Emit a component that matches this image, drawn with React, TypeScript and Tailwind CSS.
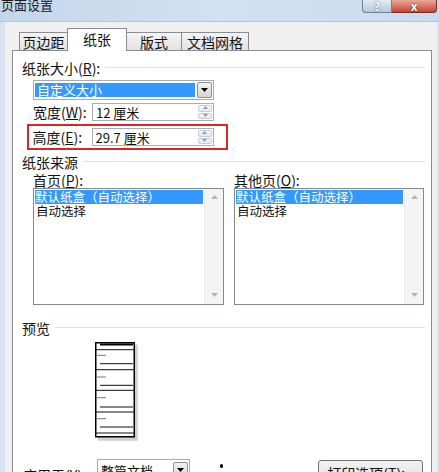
import type { FC, ReactElement } from 'react';

const font = "font-['Noto_Sans_CJK_SC','Noto_Sans',sans-serif]";

// label like 纸张大小(R): with the access key underlined
const Label: FC<{ text: string; k: string }> = ({ text, k }): ReactElement => (
  <span className="whitespace-nowrap">
    {text}(<span className="underline underline-offset-1">{k}</span>):
  </span>
);

const Tri: FC<{ up?: boolean; color?: string; w?: number }> = ({ up, color = '#000', w = 7 }) => (
  <svg width={w} height={Math.ceil(w / 2) + 1} viewBox={`0 0 ${w} ${Math.ceil(w / 2) + 1}`}>
    {up ? (
      <polygon points={`0,${Math.ceil(w / 2)} ${w},${Math.ceil(w / 2)} ${w / 2},0`} fill={color} />
    ) : (
      <polygon points={`0,0 ${w},0 ${w / 2},${Math.ceil(w / 2)}`} fill={color} />
    )}
  </svg>
);

const Spin: FC = () => (
  <div className="w-[14px] h-full flex flex-col gap-px py-px">
    <div className="flex-1 border border-[#c3cdd9] rounded-[2px] bg-gradient-to-b from-[#f7f9fb] to-[#e4e9ef] flex items-center justify-center">
      <Tri up color="#8a9bb0" w={5} />
    </div>
    <div className="flex-1 border border-[#c3cdd9] rounded-[2px] bg-gradient-to-b from-[#f7f9fb] to-[#e4e9ef] flex items-center justify-center">
      <Tri color="#8a9bb0" w={5} />
    </div>
  </div>
);

const DropBtn: FC = () => (
  <div className="w-[15px] h-[16px] border border-[#8e8f8f] rounded-[2px] bg-gradient-to-b from-[#f2f2f2] to-[#d6d6d6] flex items-center justify-center">
    <Tri w={7} />
  </div>
);

const SectionTitle: FC<{ text: string }> = ({ text }) => (
  <div className="h-[20px] pl-[9px] pr-[6px] flex items-center">
    <span className="text-[14px] leading-none">{text}</span>
    <div className="flex-1 h-px bg-[#dde1e6] ml-[5px] -mt-[2px]" />
  </div>
);

const ListBox: FC<{ label: string; k: string; w: string }> = ({ label, k, w }) => (
  <div className={`${w} flex flex-col`}>
    <div className="h-[16px] text-[14px] leading-[16px]">
      <Label text={label} k={k} />
    </div>
    <div className="h-[117px] border border-[#828790] flex bg-white">
      <div className="flex-1 pt-px pl-px pr-px text-[12.5px] leading-[14px]">
        <div className="h-[14px] bg-[#3399ff] text-white whitespace-nowrap">默认纸盒（自动选择）</div>
        <div className="h-[14px] whitespace-nowrap pl-[1px]">自动选择</div>
      </div>
      <div className="w-[19px] bg-[#f4f4f4] border-l border-[#ececec] flex flex-col justify-between">
        <div className="h-[17px] flex items-center justify-center">
          <Tri up color="#b4b4b4" w={7} />
        </div>
        <div className="h-[17px] flex items-center justify-center">
          <Tri color="#b4b4b4" w={7} />
        </div>
      </div>
    </div>
  </div>
);

const PagePreview: FC = () => {
  const full = [7.7, 27.7, 48.3, 70, 91];
  const short = [13.3, 35, 55.7, 76.7];
  const long = [21.7, 43.3, 65, 85];
  return (
    <svg width="46" height="101" viewBox="0 0 46 101">
      <rect x="3" y="3" width="40" height="96" fill="#9a9a9a" opacity="0.35" />
      <rect x="2" y="2" width="40" height="96" fill="#bdbdbd" opacity="0.4" />
      <rect x="0.75" y="0.75" width="38.5" height="94" fill="#fff" stroke="#000" strokeWidth="1.5" />
      <line x1="5" y1="2.5" x2="38" y2="2.5" stroke="#000" strokeWidth="2" />
      {full.map((y) => (
        <line key={`f${y}`} x1="1" y1={y} x2="39" y2={y} stroke="#111" strokeWidth="1" />
      ))}
      {short.map((y) => (
        <line key={`s${y}`} x1="1.5" y1={y} x2="11" y2={y} stroke="#777" strokeWidth="1" />
      ))}
      {long.map((y) => (
        <line key={`l${y}`} x1="5" y1={y} x2="38" y2={y} stroke="#111" strokeWidth="1" />
      ))}
    </svg>
  );
};

const App: FC = (): ReactElement => {
  return (
    <div className={`w-[439px] h-[472px] overflow-hidden bg-[#d7e3f0] flex flex-col text-[#111] ${font}`}>
      {/* title bar */}
      <div className="h-[22px] shrink-0 flex items-start justify-between bg-gradient-to-r from-[#c3d6eb] via-[#d2e1f1] to-[#c9dbee] border-b border-[#b3c6dc]">
        <span className="text-[13px] leading-none -mt-[2px] pl-px text-[#1a1a1a]">页面设置</span>
        <div className="flex mr-[2px]">
          <div className="w-[30px] h-[13px] rounded-bl-[4px] border border-t-0 border-[#6f8196] bg-gradient-to-b from-[#e3ebf4] to-[#b6c7db] flex items-center justify-center text-[11px] leading-none font-bold text-white [text-shadow:0_0_2px_#44566b]">
            ?
          </div>
          <div className="w-[45px] h-[13px] rounded-br-[4px] border border-t-0 border-l-0 border-[#7e2d25] bg-gradient-to-b from-[#e8a898] to-[#c4422f] flex items-center justify-center text-[12px] leading-none font-bold text-white [text-shadow:0_0_2px_#5a1a12]">
            x
          </div>
        </div>
      </div>

      {/* dialog body */}
      <div className="flex-1 ml-[5px] mr-[2px] bg-[#f0f0f0] pt-[6px] pl-[7px] pr-[5px] flex flex-col">
        {/* tabs */}
        <div className="h-[22px] shrink-0 flex items-end pl-[7px] text-[14px]">
          <div className="w-[49px] h-[18px] border border-b-0 border-[#898c95] bg-gradient-to-b from-[#f4f4f4] to-[#e2e2e2] flex items-center justify-center leading-none">
            页边距
          </div>
          <div className="w-[60px] h-[23px] -mb-px -ml-px border border-b-0 border-[#898c95] bg-white relative z-10 flex items-center justify-center leading-none pb-[2px]">
            纸张
          </div>
          <div className="w-[56px] h-[18px] -ml-px border border-b-0 border-[#898c95] bg-gradient-to-b from-[#f4f4f4] to-[#e2e2e2] flex items-center justify-center leading-none">
            版式
          </div>
          <div className="w-[68px] h-[18px] -ml-px border border-b-0 border-[#898c95] bg-gradient-to-b from-[#f4f4f4] to-[#e2e2e2] flex items-center justify-center leading-none">
            文档网格
          </div>
        </div>

        {/* tab panel */}
        <div className="flex-1 border border-[#898c95] bg-white flex flex-col">
          <div className="mt-[7px] h-[20px] pl-[9px] pr-[6px] flex items-center">
            <span className="text-[14px] leading-none">
              <Label text="纸张大小" k="R" />
            </span>
            <div className="flex-1 h-px bg-[#dde1e6] ml-[5px] -mt-[2px]" />
          </div>

          {/* paper size dropdown */}
          <div className="mt-[2px] ml-[20px] w-[181px] h-[20px] border border-[#a5acb5] flex items-center px-[1px]">
            <div className="flex-1 h-[14px] bg-[#3399ff] text-white text-[13px] leading-[14px] pl-[2px]">自定义大小</div>
            <div className="ml-[2px]">
              <DropBtn />
            </div>
          </div>

          {/* width */}
          <div className="mt-[3px] ml-[20px] h-[18px] flex items-center">
            <span className="w-[59px] text-[14px] leading-none">
              <Label text="宽度" k="W" />
            </span>
            <div className="w-[122px] h-[18px] border border-[#abadb3] flex items-center pr-px">
              <span className="flex-1 pl-[3px] text-[13px] leading-none">12 厘米</span>
              <Spin />
            </div>
          </div>

          {/* height, marked in red */}
          <div className="mt-[3px] ml-[14px] w-[201px] h-[26px] border-[2.5px] border-[#d7262d] flex items-center pl-[3.5px]">
            <span className="w-[59px] text-[14px] leading-none">
              <Label text="高度" k="E" />
            </span>
            <div className="w-[122px] h-[18px] border border-[#abadb3] flex items-center pr-px">
              <span className="flex-1 pl-[3px] text-[13px] leading-none">29.7 厘米</span>
              <Spin />
            </div>
          </div>

          <div className="mt-[2px]">
            <SectionTitle text="纸张来源" />
          </div>

          <div className="ml-[20px] flex gap-[10px]">
            <ListBox label="首页" k="P" w="w-[191px]" />
            <ListBox label="其他页" k="O" w="w-[190px]" />
          </div>

          <div className="mt-[13px]">
            <SectionTitle text="预览" />
          </div>

          <div className="mt-[4px] ml-[82px]">
            <PagePreview />
          </div>

          {/* bottom row */}
          <div className="mt-[16px] pl-[10px] pr-[8px] flex items-start">
            <span className="w-[74px] text-[14px] leading-none pt-[9px]">
              <Label text="应用于" k="Y" />
            </span>
            <div className="w-[93px] h-[22px] border border-[#a5acb5] flex items-center pl-[3px] pr-px">
              <span className="flex-1 text-[13px] leading-none">整篇文档</span>
              <DropBtn />
            </div>
            <div className="ml-[30px] mt-[5px] w-[3px] h-[4px] rounded-full bg-black" />
            <div className="ml-auto mt-px w-[105px] h-[26px] rounded-[3px] border border-[#707070] bg-gradient-to-b from-[#f3f3f3] to-[#dcdcdc] flex items-center justify-center text-[14px] leading-none">
              <Label text="打印选项" k="T" />
              <span className="-ml-[3px]">...</span>
            </div>
          </div>
        </div>
      </div>
    </div>
  );
};

export default App;
